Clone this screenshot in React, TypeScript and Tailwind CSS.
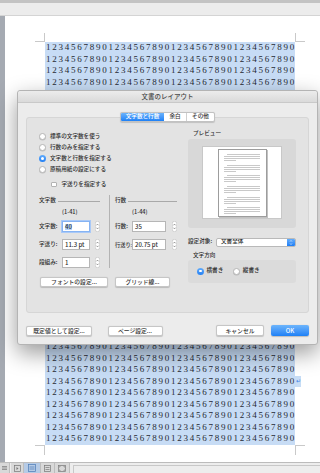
import React from "react";

const JP = "font-['Noto_Sans_CJK_JP','Noto_Sans',sans-serif]";

function Radio({ checked }: { checked?: boolean }) {
  return checked ? (
    <span className="block w-[7px] h-[7px] rounded-full bg-gradient-to-b from-[#62acfb] to-[#1f7ff4] flex items-center justify-center shrink-0">
      <span className="block w-[2.5px] h-[2.5px] rounded-full bg-white" />
    </span>
  ) : (
    <span className="block w-[7px] h-[7px] rounded-full bg-white border border-[#b8b8b8] shadow-[0_0.5px_0.5px_rgba(0,0,0,0.15)] shrink-0" />
  );
}

function Stepper() {
  return (
    <svg width="5" height="11" viewBox="0 0 5 11" className="shrink-0 block">
      <rect x="0.3" y="0.3" width="4.4" height="10.4" rx="2.2" fill="#fff" stroke="#bdbdbd" strokeWidth="0.6" />
      <path d="M1.4 4.3 L2.5 3.1 L3.6 4.3" fill="none" stroke="#555" strokeWidth="0.6" />
      <path d="M1.4 6.7 L2.5 7.9 L3.6 6.7" fill="none" stroke="#555" strokeWidth="0.6" />
    </svg>
  );
}

function Btn({ children, className }: { children: React.ReactNode; className: string }) {
  return (
    <div
      className={`bg-white border border-[#c6c6c6] rounded-[2px] shadow-[0_0.5px_1px_rgba(0,0,0,0.18)] flex items-center justify-center text-[5.8px] leading-none text-[#333] whitespace-nowrap ${className}`}
    >
      {children}
    </div>
  );
}

function PreviewPage() {
  const groups = [0, 1, 2, 3, 4, 5];
  return (
    <div className="w-[49px] h-[68px] mx-auto mt-[2px] bg-white border border-[#9d9d9d] shadow-[1px_1px_0_#c2c2c2] pt-[4px] px-[5.5px] flex flex-col gap-[3.7px]">
      {groups.map((g) => (
        <div key={g} className="flex flex-col gap-[1px]">
          <div className="h-px bg-[#c9c9c9] ml-[3px]" />
          <div className="h-px bg-[#c9c9c9]" />
          <div className="h-px bg-[#c9c9c9]" />
          <div className="h-px bg-[#c9c9c9] w-[12px]" />
        </div>
      ))}
    </div>
  );
}

function Dialog() {
  return (
    <div
      className={`absolute left-[17px] top-[90px] w-[301px] h-[255px] bg-[#ececec] border border-[#b4b4b4] rounded-[3px] shadow-[0_8px_22px_rgba(0,0,0,0.4)] flex flex-col ${JP} font-medium text-[#2f2f2f]`}
    >
      <div className="h-[12px] shrink-0 bg-gradient-to-b from-[#ececec] to-[#dadada] border-b border-[#c9c9c9] rounded-t-[3px] flex items-center justify-center text-[6.5px] leading-none text-[#4a4a4a]">
        文書のレイアウト
      </div>
      <div className="flex flex-col">
        {/* tabs */}
        <div className="mt-[9px] h-[10px] flex justify-center relative z-10">
          <div className="flex h-[10px] border border-[#c2c2c2] rounded-[2px] bg-white overflow-hidden shadow-[0_0.5px_1px_rgba(0,0,0,0.15)] text-[5.6px] leading-none">
            <div className="w-[43px] flex items-center justify-center bg-gradient-to-b from-[#6ab2fb] to-[#1c80f6] text-white">
              文字数と行数
            </div>
            <div className="w-[22px] flex items-center justify-center text-[#333]">余白</div>
            <div className="w-[28px] flex items-center justify-center border-l border-[#d0d0d0] text-[#333]">その他</div>
          </div>
        </div>
        {/* panel */}
        <div className="mx-[8px] mt-[-5px] h-[196px] bg-[#e3e3e3] border border-[#d6d6d6] rounded-[3px] flex text-[5.6px] leading-none">
          {/* left column */}
          <div className="ml-[12px] mt-[13px] w-[140px] flex flex-col">
            {[
              ["標準の文字数を使う", false],
              ["行数のみを指定する", false],
              ["文字数と行数を指定する", true],
              ["原稿用紙の設定にする", false],
            ].map(([t, c]) => (
              <div key={t as string} className="h-[11px] flex items-center gap-[4px]">
                <Radio checked={c as boolean} />
                <span>{t as string}</span>
              </div>
            ))}
            <div className="mt-[4px] h-[11px] flex items-center pl-[12px] gap-[5px]">
              <span className="block w-[5.5px] h-[5.5px] bg-white border border-[#b3b3b3] rounded-[1px] shrink-0" />
              <span>字送りを指定する</span>
            </div>
            <div className="mt-[7px] flex">
              {/* 文字数 */}
              <div className="w-[61px] flex flex-col">
                <div className="h-[8px] flex items-center">
                  <span>文字数</span>
                  <div className="flex-1 ml-[2px] h-px bg-[#a9a9a9]" />
                </div>
                <div className="mt-[4px] h-[8px] flex items-center pl-[23px]">(1-41)</div>
                <div className="mt-[4px] flex flex-col gap-[7px]">
                  <div className="h-[11px] flex items-center">
                    <span className="w-[23px] shrink-0 whitespace-nowrap">文字数:</span>
                    <div className="w-[28px] h-[11px] bg-white border border-[#86b3f3] ring-1 ring-[#a9c9f7] flex items-center pl-[2px] text-[6px]">
                      <span className="bg-[#b3d3fb]">40</span>
                    </div>
                    <div className="ml-[5px]">
                      <Stepper />
                    </div>
                  </div>
                  <div className="h-[11px] flex items-center">
                    <span className="w-[23px] shrink-0 whitespace-nowrap">字送り:</span>
                    <div className="w-[28px] h-[11px] bg-white border border-[#b6b6b6] flex items-center pl-[2px] text-[6px] whitespace-nowrap">
                      11.3 pt
                    </div>
                    <div className="ml-[5px]">
                      <Stepper />
                    </div>
                  </div>
                  <div className="h-[11px] flex items-center">
                    <span className="w-[23px] shrink-0 whitespace-nowrap">段組み:</span>
                    <div className="w-[28px] h-[11px] bg-white border border-[#b6b6b6] flex items-center pl-[2px] text-[6px]">
                      1
                    </div>
                    <div className="ml-[5px]">
                      <Stepper />
                    </div>
                  </div>
                </div>
              </div>
              <div className="ml-[9px] mt-[-2px] w-px bg-[#b3b3b3]" />
              {/* 行数 */}
              <div className="w-[67px] pl-[5px] flex flex-col">
                <div className="h-[8px] flex items-center">
                  <span>行数</span>
                  <div className="flex-1 ml-[2px] h-px bg-[#a9a9a9]" />
                </div>
                <div className="mt-[4px] h-[8px] flex items-center pl-[17px]">(1-44)</div>
                <div className="mt-[4px] flex flex-col gap-[7px]">
                  <div className="h-[11px] flex items-center">
                    <span className="w-[17px] shrink-0 whitespace-nowrap">行数:</span>
                    <div className="w-[34px] h-[11px] bg-white border border-[#b6b6b6] flex items-center pl-[2px] text-[6px] relative">
                      35
                    </div>
                    <div className="ml-[6px]">
                      <Stepper />
                    </div>
                  </div>
                  <div className="h-[11px] flex items-center">
                    <span className="w-[17px] shrink-0 whitespace-nowrap text-[5.2px]">行送り:</span>
                    <div className="w-[34px] h-[11px] bg-white border border-[#b6b6b6] flex items-center pl-[2px] text-[6px] whitespace-nowrap relative">
                      20.75 pt
                    </div>
                    <div className="ml-[6px]">
                      <Stepper />
                    </div>
                  </div>
                </div>
              </div>
            </div>
            <div className="mt-[9px] flex">
              <Btn className="ml-[1px] w-[68px] h-[10px]">フォントの設定...</Btn>
              <Btn className="ml-[7px] w-[55px] h-[10px]">グリッド線...</Btn>
            </div>
          </div>
          {/* right column */}
          <div className="ml-auto mr-[12px] mt-[12px] w-[108px] flex flex-col">
            <div className="h-[8px] flex items-center pl-[5px]">プレビュー</div>
            <div className="mt-[1px] h-[89px] bg-[#d8d8d8] rounded-[3px] pt-[7px]">
              <div className="w-[80px] h-[73px] mx-auto bg-white border border-[#c8c8c8]">
                <PreviewPage />
              </div>
            </div>
            <div className="mt-[9.5px] h-[9px] flex items-center">
              <span className="w-[28px] shrink-0 whitespace-nowrap">設定対象:</span>
              <div className="w-[80px] h-[9px] bg-white border border-[#b9b9b9] rounded-[2px] flex items-center overflow-hidden">
                <span className="flex-1 pl-[4px]">文書全体</span>
                <div className="w-[8px] h-full bg-gradient-to-b from-[#62acfb] to-[#1c7ef5] flex items-center justify-center">
                  <svg width="4" height="7" viewBox="0 0 4 7" className="block">
                    <path d="M1 2.6 L2 1.5 L3 2.6" fill="none" stroke="#fff" strokeWidth="0.6" />
                    <path d="M1 4.4 L2 5.5 L3 4.4" fill="none" stroke="#fff" strokeWidth="0.6" />
                  </svg>
                </div>
              </div>
            </div>
            <div className="mt-[5px] h-[8px] flex items-center pl-[5px]">文字方向</div>
            <div className="h-[23px] bg-[#dbdbdb] rounded-[3px] flex items-center pl-[9px]">
              <Radio checked />
              <span className="ml-[2.5px]">横書き</span>
              <div className="ml-[9.5px]">
                <Radio />
              </div>
              <span className="ml-[3px]">縦書き</span>
            </div>
          </div>
        </div>
        {/* bottom buttons */}
        <div className="mt-[12px] h-[11px] flex items-center px-[8px]">
          <Btn className="w-[66px] h-[10px]">既定値として設定...</Btn>
          <Btn className="ml-[15.5px] w-[55px] h-[10px]">ページ設定...</Btn>
          <div className="flex-1" />
          <Btn className="w-[48px] h-[11px]">キャンセル</Btn>
          <div className="ml-[7px] w-[38px] h-[11px] rounded-[2px] bg-gradient-to-b from-[#6cb4fb] to-[#1b80f6] text-white flex items-center justify-center text-[6px] leading-none shadow-[0_0.5px_1px_rgba(0,0,0,0.2)]">
            OK
          </div>
        </div>
      </div>
    </div>
  );
}

function StatusIcon({ children, className }: { children: React.ReactNode; className: string }) {
  return <div className={`h-full flex items-center justify-center border-r border-[#bdbdbd] ${className}`}>{children}</div>;
}

export default function App() {
  const digits = "1234567890".repeat(4);
  const rows = Array.from({ length: 35 }, (_, i) => i);
  return (
    <div className="w-[320px] h-[473px] relative overflow-hidden bg-white flex flex-col">
      <div className="h-[3px] shrink-0 bg-[#c3c3c3]" />
      <div className="h-[13px] shrink-0 bg-[#ececec] border-b border-[#d4d4d4]" />
      <div className="flex flex-1 min-h-0">
        <div className="w-[5px] bg-[#a5aab2]" />
        <div className="flex-1 bg-white flex flex-col">
          <div className="h-[17px] shrink-0" />
          <div className="h-[9px] flex shrink-0">
            <div className="ml-[30px] w-[10px] h-[9px] border-r border-b border-[#c9c9c9]" />
            <div className="w-[250px]" />
            <div className="w-[10px] h-[9px] border-l border-b border-[#c9c9c9]" />
          </div>
          <div className="ml-[40px] flex flex-col">
            {rows.map((r) => (
              <div key={r} className="flex h-[11.5px]">
                <div className="w-[250px] h-[11.5px] bg-[#c7dcf5] font-['Liberation_Serif',serif] text-[9px] leading-[11.5px] tracking-[1.75px] text-[#262a33] whitespace-nowrap overflow-hidden pl-[1px]">
                  {r >= 4 && r <= 25 ? "" : digits}
                </div>
                {r === 29 && (
                  <span className="h-[11.5px] bg-[#c7dcf5] text-[#3f84e6] text-[6px] leading-[11.5px] px-[0.5px]">↵</span>
                )}
              </div>
            ))}
          </div>
          <div className="h-[10px] flex shrink-0">
            <div className="ml-[30px] w-[10px] h-[10px] border-r border-t border-[#c9c9c9]" />
            <div className="w-[250px]" />
            <div className="w-[10px] h-[10px] border-l border-t border-[#c9c9c9]" />
          </div>
        </div>
      </div>
      <div className="h-[11px] shrink-0 bg-[#ededed] border-t border-[#bcbcbc] flex">
        <StatusIcon className="w-[10px] bg-[#d9d9d9]">
          <svg width="6" height="6" viewBox="0 0 6 6" className="block">
            <path d="M0 1.5H5M0 3H5M0 4.5H5" stroke="#777" strokeWidth="0.7" />
          </svg>
        </StatusIcon>
        <StatusIcon className="w-[13px] bg-[#d9d9d9] ml-[1px]">
          <svg width="7" height="7" viewBox="0 0 7 7" className="block">
            <rect x="0.5" y="0.5" width="6" height="6" fill="none" stroke="#777" strokeWidth="0.7" />
            <path d="M2.5 2 L4.5 3.5 L2.5 5Z" fill="#777" />
          </svg>
        </StatusIcon>
        <StatusIcon className="w-[17px] bg-[#b6cbe6]">
          <svg width="8" height="8" viewBox="0 0 8 8" className="block">
            <rect x="0.5" y="0.5" width="7" height="7" fill="none" stroke="#4b79b5" strokeWidth="0.7" />
            <path d="M1.5 3H6.5M1.5 5H6.5" stroke="#4b79b5" strokeWidth="0.7" />
          </svg>
        </StatusIcon>
        <StatusIcon className="w-[14px] bg-[#d9d9d9]">
          <svg width="7" height="7" viewBox="0 0 7 7" className="block">
            <rect x="0.5" y="0.5" width="6" height="6" fill="none" stroke="#777" strokeWidth="0.7" />
            <path d="M1.5 2.5H5.5M1.5 4.5H5.5" stroke="#777" strokeWidth="0.7" />
          </svg>
        </StatusIcon>
        <StatusIcon className="w-[15px] bg-[#d9d9d9]">
          <svg width="8" height="7" viewBox="0 0 8 7" className="block">
            <rect x="0.5" y="0.5" width="7" height="6" fill="none" stroke="#777" strokeWidth="0.7" />
            <path d="M1.5 2.5V1.5H2.5M5.5 1.5H6.5V2.5M6.5 4.5V5.5H5.5M2.5 5.5H1.5V4.5" fill="none" stroke="#777" strokeWidth="0.6" />
          </svg>
        </StatusIcon>
        <div className="ml-[3px] flex-1 mt-[2px] border-t border-[#c8c8c8] border-l" />
      </div>
      <Dialog />
    </div>
  );
}
